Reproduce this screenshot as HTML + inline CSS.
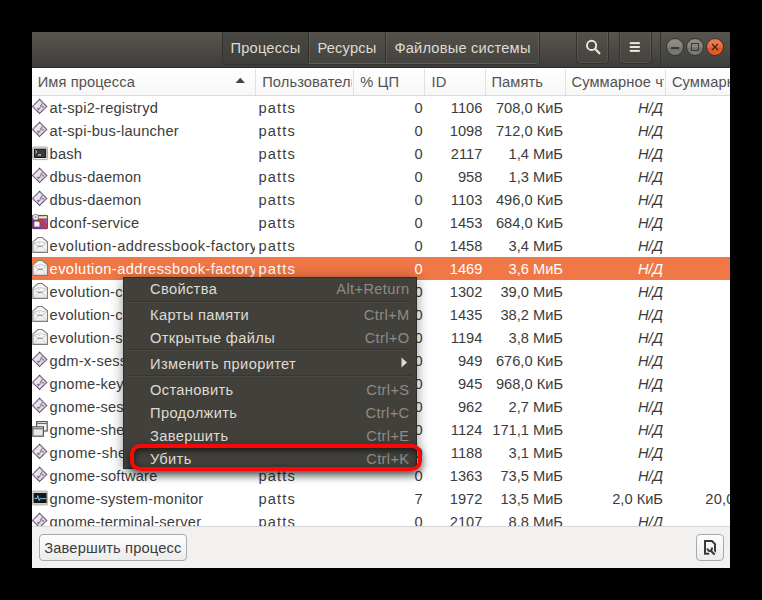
<!DOCTYPE html><html><head><meta charset="utf-8"><style>
*{margin:0;padding:0;box-sizing:border-box}
html,body{width:762px;height:600px;background:#000;overflow:hidden}
body{font-family:"Liberation Sans",sans-serif;font-size:14.67px;position:relative}
.win{position:absolute;left:32px;top:32px;width:698px;height:536px;background:#f2f1f0;overflow:hidden}
.hdr{position:absolute;left:0;top:0;width:698px;height:36px;background:linear-gradient(to bottom,#58554e 0%,#4c4a45 50%,#3e3d39 100%);border-bottom:1px solid #2b2a27}
.grp{position:absolute;left:190px;top:-4px;height:37px;width:318px;border:1px solid #33322e;border-radius:4px;background:linear-gradient(to bottom,#55524c,#45433f);box-shadow:inset 0 0 0 1px rgba(255,255,255,0.07)}
.tab{position:absolute;top:0;height:35px;line-height:38px;letter-spacing:0.2px;color:#dfdbd2;text-align:center;white-space:nowrap}
.tsep{position:absolute;top:0;width:1px;height:34px;background:#32312e}
.ibtn{position:absolute;top:-4px;width:33px;height:35.6px;border:1px solid #33322e;border-radius:4px;background:linear-gradient(to bottom,#55524c,#45433f);box-shadow:inset 0 0 0 1px rgba(255,255,255,0.07)}
.vsep{position:absolute;left:628px;top:0;width:1px;height:35px;background:#34332f}
.circ{position:absolute;top:6px;width:18px;height:18px;border-radius:50%;border:1px solid #34332f}
.colhdr{position:absolute;left:0;top:36px;width:698px;height:28px;background:linear-gradient(to bottom,#ffffff,#f7f7f7);border-bottom:1px solid #dcdcdc}
.ch{position:absolute;top:0;height:27px;line-height:29px;letter-spacing:0.1px;color:#525252;white-space:nowrap;overflow:hidden}
.csep{position:absolute;top:1px;width:1px;height:26px;background:#e2e2e2}
.tree{position:absolute;left:0;top:64px;width:698px;height:430px;background:#fff;overflow:hidden}
.row{position:absolute;left:0;width:698px;height:23px;line-height:25px;letter-spacing:0.2px;color:#3c3c3c;white-space:nowrap}
.row.sel{background:#f07746;color:#fff}
.c{position:absolute;top:0;height:23px;overflow:hidden}
.r{text-align:right;letter-spacing:0}
.it{font-style:italic}
.ico{position:absolute;left:0;top:0;width:16px;height:23px}
.bot{position:absolute;left:0;top:494px;width:698px;height:42px;background:#f2f1f0;border-top:1px solid #d6d6d6}
.btn{position:absolute;border:1px solid #a9a9a9;border-radius:4px;background:linear-gradient(to bottom,#fdfdfd,#ececec);color:#3c3c3c;white-space:nowrap}
.menu{position:absolute;left:123px;top:277px;width:294px;height:192px;background:#42403b;border:1px solid #2e2d2a;box-shadow:0 2px 12px rgba(0,0,0,0.42)}
.mi{position:absolute;left:0;width:292px;height:23px;line-height:25px;letter-spacing:0.35px;color:#dfdbd2;white-space:nowrap}
.mi .l{position:absolute;left:26px}
.mi .a{position:absolute;right:6.5px;color:#8e8b84}
.msep{position:absolute;left:5px;width:283px;height:2px;background:#37362f;border-bottom:1px solid #4b4944}
</style></head><body>
<svg width="0" height="0" style="position:absolute"><defs><linearGradient id="dg" x1="0" y1="0" x2="1" y2="1"><stop offset="0" stop-color="#f6f6f6"/><stop offset="1" stop-color="#d2d2d2"/></linearGradient></defs></svg>
<div class="win">
<div class="hdr">
<div class="grp">
<div class="tab" style="left:0;width:85px;background:linear-gradient(to bottom,#4a4843,#403e3a);border-radius:0 0 0 3px">Процессы</div>
<div class="tsep" style="left:85px"></div>
<div class="tab" style="left:86px;width:76px;box-shadow:inset 1px 0 rgba(255,255,255,0.07),inset 0 -1px rgba(255,255,255,0.07)">Ресурсы</div>
<div class="tsep" style="left:162px"></div>
<div class="tab" style="left:163px;width:153px;box-shadow:inset 1px 0 rgba(255,255,255,0.07),inset 0 -1px rgba(255,255,255,0.07)">Файловые системы</div>
</div>
<div class="ibtn" style="left:544px"><svg width="31" height="35" viewBox="0 0 31 35" style="position:absolute;left:0;top:0"><circle cx="14.6" cy="16.4" r="4.6" stroke="#eae6dc" stroke-width="1.9" fill="none"/><path d="M18 19.8 L22.4 24.3" stroke="#eae6dc" stroke-width="2.2" stroke-linecap="round"/></svg></div>
<div class="ibtn" style="left:587px"><svg width="31" height="35" viewBox="0 0 31 35" style="position:absolute;left:0;top:0"><rect x="9.8" y="13.1" width="10" height="2" fill="#eae6dc"/><rect x="9.8" y="17" width="10" height="2" fill="#eae6dc"/><rect x="9.8" y="20.9" width="10" height="2" fill="#eae6dc"/></svg></div>
<div class="vsep"></div>
<div class="circ" style="left:634px;background:linear-gradient(to bottom,#8f8e89 0%,#85847f 50%,#6e7171 56%,#7d7e7b 100%)"><div style="position:absolute;left:4px;top:7.6px;width:8px;height:2px;background:#3a3a38"></div></div>
<div class="circ" style="left:654px;background:linear-gradient(to bottom,#8f8e89 0%,#85847f 50%,#6e7171 56%,#7d7e7b 100%)"><div style="position:absolute;left:4px;top:4px;width:8px;height:8px;border:1.2px solid #3a3a38"></div></div>
<div class="circ" style="left:674px;background:linear-gradient(to bottom,#f27c52 0%,#ee6c3c 50%,#e6561f 56%,#e95c26 100%)"><svg width="16" height="16" style="position:absolute;left:0;top:0"><path d="M5 5 L11 11 M11 5 L5 11" stroke="#2a2522" stroke-width="1.1"/><circle cx="8" cy="8" r="1" fill="#2a2522"/></svg></div>
</div>
<div class="colhdr">
<div class="ch" style="left:5.7px;width:216.3px">Имя процесса</div>
<div class="ch" style="left:230.2px;width:89.8px">Пользователь</div>
<div class="ch" style="left:328.3px;width:62.7px">% ЦП</div>
<div class="ch" style="left:399.5px;width:52.5px">ID</div>
<div class="ch" style="left:459.4px;width:72.6px">Память</div>
<div class="ch" style="left:539.5px;width:92.0px">Суммарное чтение</div>
<div class="ch" style="left:639.9px;width:87.1px">Суммарная запись</div>
<div class="csep" style="left:223.0px"></div>
<div class="csep" style="left:321.0px"></div>
<div class="csep" style="left:392.0px"></div>
<div class="csep" style="left:453.0px"></div>
<div class="csep" style="left:533.0px"></div>
<div class="csep" style="left:632.5px"></div>
<svg width="12" height="8" style="position:absolute;left:203px;top:9px"><path d="M0.5 6 L5.25 0.8 L10 6 Z" fill="#454545"/></svg>
</div>
<div class="tree">
<div class="row" style="top:0px">
<div class="c" style="left:0;width:223px"><span class="ico" style="left:0px"><svg width="16" height="23" viewBox="0 0 16 23"><path d="M7.6 3.4 L14.7 10.45 L7.6 17.5 L0.5 10.45 Z" fill="url(#dg)" stroke="#5a3a6c" stroke-width="1.15" stroke-dasharray="1.2 0.3"/><path d="M11 6.9 Q9.4 8.4 8.8 10.4 Q8.2 12.6 5.4 14.4" stroke="#8e8e8e" stroke-width="1.2" fill="none"/><ellipse cx="6.3" cy="12.4" rx="1.4" ry="0.75" fill="#9b62ae"/><ellipse cx="10.9" cy="10.7" rx="1.1" ry="0.85" fill="#a06ab4"/><circle cx="8.7" cy="9.7" r="0.6" fill="#a06ab4"/><circle cx="9.3" cy="8.2" r="0.5" fill="#a06ab4"/></svg></span><span style="position:absolute;left:17.6px;letter-spacing:inherit">at-spi2-registryd</span></div>
<div class="c" style="left:226.6px;width:94.4px;letter-spacing:1.1px">patts</div>
<div class="c r" style="left:322px;width:68.6px">0</div>
<div class="c r" style="left:393px;width:57.4px">1106</div>
<div class="c r" style="left:454px;width:77.0px">708,0 КиБ</div>
<div class="c r it" style="left:534px;width:97.0px">Н/Д</div>
</div>
<div class="row" style="top:23px">
<div class="c" style="left:0;width:223px"><span class="ico" style="left:0px"><svg width="16" height="23" viewBox="0 0 16 23"><path d="M7.6 3.4 L14.7 10.45 L7.6 17.5 L0.5 10.45 Z" fill="url(#dg)" stroke="#5a3a6c" stroke-width="1.15" stroke-dasharray="1.2 0.3"/><path d="M11 6.9 Q9.4 8.4 8.8 10.4 Q8.2 12.6 5.4 14.4" stroke="#8e8e8e" stroke-width="1.2" fill="none"/><ellipse cx="6.3" cy="12.4" rx="1.4" ry="0.75" fill="#9b62ae"/><ellipse cx="10.9" cy="10.7" rx="1.1" ry="0.85" fill="#a06ab4"/><circle cx="8.7" cy="9.7" r="0.6" fill="#a06ab4"/><circle cx="9.3" cy="8.2" r="0.5" fill="#a06ab4"/></svg></span><span style="position:absolute;left:17.6px;letter-spacing:inherit">at-spi-bus-launcher</span></div>
<div class="c" style="left:226.6px;width:94.4px;letter-spacing:1.1px">patts</div>
<div class="c r" style="left:322px;width:68.6px">0</div>
<div class="c r" style="left:393px;width:57.4px">1098</div>
<div class="c r" style="left:454px;width:77.0px">712,0 КиБ</div>
<div class="c r it" style="left:534px;width:97.0px">Н/Д</div>
</div>
<div class="row" style="top:46px">
<div class="c" style="left:0;width:223px"><span class="ico" style="left:0px"><svg width="16" height="23" viewBox="0 0 16 23"><rect x="0.6" y="5" width="15" height="12.6" rx="1.2" fill="#f2f2f2" stroke="#a0a0a0" stroke-width="0.9"/><rect x="2.3" y="7.1" width="11.5" height="8.4" fill="#3a3a3a" stroke="#0a0a0a" stroke-width="0.9"/><path d="M3.3 8.3 L5 9.8 L3.3 11.3" stroke="#e0e0e0" stroke-width="0.9" fill="none"/><rect x="6" y="12.4" width="3" height="1.1" fill="#f0f0f0"/></svg></span><span style="position:absolute;left:17.6px;letter-spacing:inherit">bash</span></div>
<div class="c" style="left:226.6px;width:94.4px;letter-spacing:1.1px">patts</div>
<div class="c r" style="left:322px;width:68.6px">0</div>
<div class="c r" style="left:393px;width:57.4px">2117</div>
<div class="c r" style="left:454px;width:77.0px">1,4 МиБ</div>
<div class="c r it" style="left:534px;width:97.0px">Н/Д</div>
</div>
<div class="row" style="top:69px">
<div class="c" style="left:0;width:223px"><span class="ico" style="left:0px"><svg width="16" height="23" viewBox="0 0 16 23"><path d="M7.6 3.4 L14.7 10.45 L7.6 17.5 L0.5 10.45 Z" fill="url(#dg)" stroke="#5a3a6c" stroke-width="1.15" stroke-dasharray="1.2 0.3"/><path d="M11 6.9 Q9.4 8.4 8.8 10.4 Q8.2 12.6 5.4 14.4" stroke="#8e8e8e" stroke-width="1.2" fill="none"/><ellipse cx="6.3" cy="12.4" rx="1.4" ry="0.75" fill="#9b62ae"/><ellipse cx="10.9" cy="10.7" rx="1.1" ry="0.85" fill="#a06ab4"/><circle cx="8.7" cy="9.7" r="0.6" fill="#a06ab4"/><circle cx="9.3" cy="8.2" r="0.5" fill="#a06ab4"/></svg></span><span style="position:absolute;left:17.6px;letter-spacing:inherit">dbus-daemon</span></div>
<div class="c" style="left:226.6px;width:94.4px;letter-spacing:1.1px">patts</div>
<div class="c r" style="left:322px;width:68.6px">0</div>
<div class="c r" style="left:393px;width:57.4px">958</div>
<div class="c r" style="left:454px;width:77.0px">1,3 МиБ</div>
<div class="c r it" style="left:534px;width:97.0px">Н/Д</div>
</div>
<div class="row" style="top:92px">
<div class="c" style="left:0;width:223px"><span class="ico" style="left:0px"><svg width="16" height="23" viewBox="0 0 16 23"><path d="M7.6 3.4 L14.7 10.45 L7.6 17.5 L0.5 10.45 Z" fill="url(#dg)" stroke="#5a3a6c" stroke-width="1.15" stroke-dasharray="1.2 0.3"/><path d="M11 6.9 Q9.4 8.4 8.8 10.4 Q8.2 12.6 5.4 14.4" stroke="#8e8e8e" stroke-width="1.2" fill="none"/><ellipse cx="6.3" cy="12.4" rx="1.4" ry="0.75" fill="#9b62ae"/><ellipse cx="10.9" cy="10.7" rx="1.1" ry="0.85" fill="#a06ab4"/><circle cx="8.7" cy="9.7" r="0.6" fill="#a06ab4"/><circle cx="9.3" cy="8.2" r="0.5" fill="#a06ab4"/></svg></span><span style="position:absolute;left:17.6px;letter-spacing:inherit">dbus-daemon</span></div>
<div class="c" style="left:226.6px;width:94.4px;letter-spacing:1.1px">patts</div>
<div class="c r" style="left:322px;width:68.6px">0</div>
<div class="c r" style="left:393px;width:57.4px">1103</div>
<div class="c r" style="left:454px;width:77.0px">496,0 КиБ</div>
<div class="c r it" style="left:534px;width:97.0px">Н/Д</div>
</div>
<div class="row" style="top:115px">
<div class="c" style="left:0;width:223px"><span class="ico" style="left:0px"><svg width="16" height="23" viewBox="0 0 16 23"><defs><linearGradient id="pg" x1="0" y1="0" x2="1" y2="0"><stop offset="0" stop-color="#6e2c84"/><stop offset="1" stop-color="#9a5cb0"/></linearGradient></defs><rect x="0.4" y="4.4" width="15.2" height="13.3" rx="0.8" fill="url(#pg)" stroke="#54205f" stroke-width="0.8"/><rect x="0.6" y="4.6" width="14.8" height="3.6" fill="#5e5048"/><rect x="6.6" y="5.2" width="8.4" height="2.3" fill="#f3e6c4"/><circle cx="3.6" cy="6.2" r="2.9" fill="#f0f0f0" stroke="#7c7c7c" stroke-width="0.9"/><circle cx="3.6" cy="6.2" r="0.9" fill="#888"/><rect x="2.2" y="10.8" width="5.2" height="4.8" fill="#f6f6f6" stroke="#bbb" stroke-width="0.4"/><path d="M7.4 8.6 L15.2 17.2" stroke="#a82424" stroke-width="3.1"/><path d="M7.4 8.6 L15.2 17.2" stroke="#d84040" stroke-width="1.9"/></svg></span><span style="position:absolute;left:17.6px;letter-spacing:inherit">dconf-service</span></div>
<div class="c" style="left:226.6px;width:94.4px;letter-spacing:1.1px">patts</div>
<div class="c r" style="left:322px;width:68.6px">0</div>
<div class="c r" style="left:393px;width:57.4px">1453</div>
<div class="c r" style="left:454px;width:77.0px">684,0 КиБ</div>
<div class="c r it" style="left:534px;width:97.0px">Н/Д</div>
</div>
<div class="row" style="top:138px">
<div class="c" style="left:0;width:223px"><span class="ico" style="left:0px"><svg width="16" height="23" viewBox="0 0 16 23"><defs><linearGradient id="eg" x1="0" y1="0" x2="0" y2="1"><stop offset="0" stop-color="#fdfdfd"/><stop offset="1" stop-color="#ececec"/></linearGradient></defs><path d="M0.9 18.4 L15.5 18.4 L15.5 7.9 L10.1 3.5 L6.1 3.5 L0.9 7.9 Z" fill="url(#eg)" stroke="#7e7e7e" stroke-width="1.1"/><path d="M2.6 9 Q8 6.2 13.6 8.8" stroke="#c4c4c4" stroke-width="0.9" fill="none"/><path d="M1.4 8.4 L5.9 12.3 L10.3 12.3 L14.9 8.4" stroke="#b9b9b9" stroke-width="0.8" fill="none"/><path d="M5.6 12.3 L10.6 12.3" stroke="#8e8e8e" stroke-width="1.1"/><path d="M2.3 17.4 L6.2 12.8 M14.1 17.4 L10.2 12.8" stroke="#cfcfcf" stroke-width="0.8" fill="none"/><circle cx="7.4" cy="9.3" r="0.55" fill="#a9b0b4"/></svg></span><span style="position:absolute;left:17.6px;letter-spacing:0.4px">evolution-addressbook-factory</span></div>
<div class="c" style="left:226.6px;width:94.4px;letter-spacing:1.1px">patts</div>
<div class="c r" style="left:322px;width:68.6px">0</div>
<div class="c r" style="left:393px;width:57.4px">1458</div>
<div class="c r" style="left:454px;width:77.0px">3,4 МиБ</div>
<div class="c r it" style="left:534px;width:97.0px">Н/Д</div>
</div>
<div class="row sel" style="top:161px">
<div class="c" style="left:0;width:223px"><span class="ico" style="left:0px"><svg width="16" height="23" viewBox="0 0 16 23"><defs><linearGradient id="eg" x1="0" y1="0" x2="0" y2="1"><stop offset="0" stop-color="#fdfdfd"/><stop offset="1" stop-color="#ececec"/></linearGradient></defs><path d="M0.9 18.4 L15.5 18.4 L15.5 7.9 L10.1 3.5 L6.1 3.5 L0.9 7.9 Z" fill="url(#eg)" stroke="#7e7e7e" stroke-width="1.1"/><path d="M2.6 9 Q8 6.2 13.6 8.8" stroke="#c4c4c4" stroke-width="0.9" fill="none"/><path d="M1.4 8.4 L5.9 12.3 L10.3 12.3 L14.9 8.4" stroke="#b9b9b9" stroke-width="0.8" fill="none"/><path d="M5.6 12.3 L10.6 12.3" stroke="#8e8e8e" stroke-width="1.1"/><path d="M2.3 17.4 L6.2 12.8 M14.1 17.4 L10.2 12.8" stroke="#cfcfcf" stroke-width="0.8" fill="none"/><circle cx="7.4" cy="9.3" r="0.55" fill="#a9b0b4"/></svg></span><span style="position:absolute;left:17.6px;letter-spacing:0.4px">evolution-addressbook-factory</span></div>
<div class="c" style="left:226.6px;width:94.4px;letter-spacing:1.1px">patts</div>
<div class="c r" style="left:322px;width:68.6px">0</div>
<div class="c r" style="left:393px;width:57.4px">1469</div>
<div class="c r" style="left:454px;width:77.0px">3,6 МиБ</div>
<div class="c r it" style="left:534px;width:97.0px">Н/Д</div>
</div>
<div class="row" style="top:184px">
<div class="c" style="left:0;width:223px"><span class="ico" style="left:0px"><svg width="16" height="23" viewBox="0 0 16 23"><defs><linearGradient id="eg" x1="0" y1="0" x2="0" y2="1"><stop offset="0" stop-color="#fdfdfd"/><stop offset="1" stop-color="#ececec"/></linearGradient></defs><path d="M0.9 18.4 L15.5 18.4 L15.5 7.9 L10.1 3.5 L6.1 3.5 L0.9 7.9 Z" fill="url(#eg)" stroke="#7e7e7e" stroke-width="1.1"/><path d="M2.6 9 Q8 6.2 13.6 8.8" stroke="#c4c4c4" stroke-width="0.9" fill="none"/><path d="M1.4 8.4 L5.9 12.3 L10.3 12.3 L14.9 8.4" stroke="#b9b9b9" stroke-width="0.8" fill="none"/><path d="M5.6 12.3 L10.6 12.3" stroke="#8e8e8e" stroke-width="1.1"/><path d="M2.3 17.4 L6.2 12.8 M14.1 17.4 L10.2 12.8" stroke="#cfcfcf" stroke-width="0.8" fill="none"/><circle cx="7.4" cy="9.3" r="0.55" fill="#a9b0b4"/></svg></span><span style="position:absolute;left:17.6px;letter-spacing:inherit">evolution-calendar-factory</span></div>
<div class="c" style="left:226.6px;width:94.4px;letter-spacing:1.1px">patts</div>
<div class="c r" style="left:322px;width:68.6px">0</div>
<div class="c r" style="left:393px;width:57.4px">1302</div>
<div class="c r" style="left:454px;width:77.0px">39,0 МиБ</div>
<div class="c r it" style="left:534px;width:97.0px">Н/Д</div>
</div>
<div class="row" style="top:207px">
<div class="c" style="left:0;width:223px"><span class="ico" style="left:0px"><svg width="16" height="23" viewBox="0 0 16 23"><defs><linearGradient id="eg" x1="0" y1="0" x2="0" y2="1"><stop offset="0" stop-color="#fdfdfd"/><stop offset="1" stop-color="#ececec"/></linearGradient></defs><path d="M0.9 18.4 L15.5 18.4 L15.5 7.9 L10.1 3.5 L6.1 3.5 L0.9 7.9 Z" fill="url(#eg)" stroke="#7e7e7e" stroke-width="1.1"/><path d="M2.6 9 Q8 6.2 13.6 8.8" stroke="#c4c4c4" stroke-width="0.9" fill="none"/><path d="M1.4 8.4 L5.9 12.3 L10.3 12.3 L14.9 8.4" stroke="#b9b9b9" stroke-width="0.8" fill="none"/><path d="M5.6 12.3 L10.6 12.3" stroke="#8e8e8e" stroke-width="1.1"/><path d="M2.3 17.4 L6.2 12.8 M14.1 17.4 L10.2 12.8" stroke="#cfcfcf" stroke-width="0.8" fill="none"/><circle cx="7.4" cy="9.3" r="0.55" fill="#a9b0b4"/></svg></span><span style="position:absolute;left:17.6px;letter-spacing:inherit">evolution-calendar-factory</span></div>
<div class="c" style="left:226.6px;width:94.4px;letter-spacing:1.1px">patts</div>
<div class="c r" style="left:322px;width:68.6px">0</div>
<div class="c r" style="left:393px;width:57.4px">1435</div>
<div class="c r" style="left:454px;width:77.0px">38,2 МиБ</div>
<div class="c r it" style="left:534px;width:97.0px">Н/Д</div>
</div>
<div class="row" style="top:230px">
<div class="c" style="left:0;width:223px"><span class="ico" style="left:0px"><svg width="16" height="23" viewBox="0 0 16 23"><defs><linearGradient id="eg" x1="0" y1="0" x2="0" y2="1"><stop offset="0" stop-color="#fdfdfd"/><stop offset="1" stop-color="#ececec"/></linearGradient></defs><path d="M0.9 18.4 L15.5 18.4 L15.5 7.9 L10.1 3.5 L6.1 3.5 L0.9 7.9 Z" fill="url(#eg)" stroke="#7e7e7e" stroke-width="1.1"/><path d="M2.6 9 Q8 6.2 13.6 8.8" stroke="#c4c4c4" stroke-width="0.9" fill="none"/><path d="M1.4 8.4 L5.9 12.3 L10.3 12.3 L14.9 8.4" stroke="#b9b9b9" stroke-width="0.8" fill="none"/><path d="M5.6 12.3 L10.6 12.3" stroke="#8e8e8e" stroke-width="1.1"/><path d="M2.3 17.4 L6.2 12.8 M14.1 17.4 L10.2 12.8" stroke="#cfcfcf" stroke-width="0.8" fill="none"/><circle cx="7.4" cy="9.3" r="0.55" fill="#a9b0b4"/></svg></span><span style="position:absolute;left:17.6px;letter-spacing:inherit">evolution-source-registry</span></div>
<div class="c" style="left:226.6px;width:94.4px;letter-spacing:1.1px">patts</div>
<div class="c r" style="left:322px;width:68.6px">0</div>
<div class="c r" style="left:393px;width:57.4px">1194</div>
<div class="c r" style="left:454px;width:77.0px">3,8 МиБ</div>
<div class="c r it" style="left:534px;width:97.0px">Н/Д</div>
</div>
<div class="row" style="top:253px">
<div class="c" style="left:0;width:223px"><span class="ico" style="left:0px"><svg width="16" height="23" viewBox="0 0 16 23"><path d="M7.6 3.4 L14.7 10.45 L7.6 17.5 L0.5 10.45 Z" fill="url(#dg)" stroke="#5a3a6c" stroke-width="1.15" stroke-dasharray="1.2 0.3"/><path d="M11 6.9 Q9.4 8.4 8.8 10.4 Q8.2 12.6 5.4 14.4" stroke="#8e8e8e" stroke-width="1.2" fill="none"/><ellipse cx="6.3" cy="12.4" rx="1.4" ry="0.75" fill="#9b62ae"/><ellipse cx="10.9" cy="10.7" rx="1.1" ry="0.85" fill="#a06ab4"/><circle cx="8.7" cy="9.7" r="0.6" fill="#a06ab4"/><circle cx="9.3" cy="8.2" r="0.5" fill="#a06ab4"/></svg></span><span style="position:absolute;left:17.6px;letter-spacing:inherit">gdm-x-session</span></div>
<div class="c" style="left:226.6px;width:94.4px;letter-spacing:1.1px">patts</div>
<div class="c r" style="left:322px;width:68.6px">0</div>
<div class="c r" style="left:393px;width:57.4px">949</div>
<div class="c r" style="left:454px;width:77.0px">676,0 КиБ</div>
<div class="c r it" style="left:534px;width:97.0px">Н/Д</div>
</div>
<div class="row" style="top:276px">
<div class="c" style="left:0;width:223px"><span class="ico" style="left:0px"><svg width="16" height="23" viewBox="0 0 16 23"><path d="M7.6 3.4 L14.7 10.45 L7.6 17.5 L0.5 10.45 Z" fill="url(#dg)" stroke="#5a3a6c" stroke-width="1.15" stroke-dasharray="1.2 0.3"/><path d="M11 6.9 Q9.4 8.4 8.8 10.4 Q8.2 12.6 5.4 14.4" stroke="#8e8e8e" stroke-width="1.2" fill="none"/><ellipse cx="6.3" cy="12.4" rx="1.4" ry="0.75" fill="#9b62ae"/><ellipse cx="10.9" cy="10.7" rx="1.1" ry="0.85" fill="#a06ab4"/><circle cx="8.7" cy="9.7" r="0.6" fill="#a06ab4"/><circle cx="9.3" cy="8.2" r="0.5" fill="#a06ab4"/></svg></span><span style="position:absolute;left:17.6px;letter-spacing:inherit">gnome-keyring-daemon</span></div>
<div class="c" style="left:226.6px;width:94.4px;letter-spacing:1.1px">patts</div>
<div class="c r" style="left:322px;width:68.6px">0</div>
<div class="c r" style="left:393px;width:57.4px">945</div>
<div class="c r" style="left:454px;width:77.0px">968,0 КиБ</div>
<div class="c r it" style="left:534px;width:97.0px">Н/Д</div>
</div>
<div class="row" style="top:299px">
<div class="c" style="left:0;width:223px"><span class="ico" style="left:0px"><svg width="16" height="23" viewBox="0 0 16 23"><path d="M7.6 3.4 L14.7 10.45 L7.6 17.5 L0.5 10.45 Z" fill="url(#dg)" stroke="#5a3a6c" stroke-width="1.15" stroke-dasharray="1.2 0.3"/><path d="M11 6.9 Q9.4 8.4 8.8 10.4 Q8.2 12.6 5.4 14.4" stroke="#8e8e8e" stroke-width="1.2" fill="none"/><ellipse cx="6.3" cy="12.4" rx="1.4" ry="0.75" fill="#9b62ae"/><ellipse cx="10.9" cy="10.7" rx="1.1" ry="0.85" fill="#a06ab4"/><circle cx="8.7" cy="9.7" r="0.6" fill="#a06ab4"/><circle cx="9.3" cy="8.2" r="0.5" fill="#a06ab4"/></svg></span><span style="position:absolute;left:17.6px;letter-spacing:inherit">gnome-session-binary</span></div>
<div class="c" style="left:226.6px;width:94.4px;letter-spacing:1.1px">patts</div>
<div class="c r" style="left:322px;width:68.6px">0</div>
<div class="c r" style="left:393px;width:57.4px">962</div>
<div class="c r" style="left:454px;width:77.0px">2,7 МиБ</div>
<div class="c r it" style="left:534px;width:97.0px">Н/Д</div>
</div>
<div class="row" style="top:322px">
<div class="c" style="left:0;width:223px"><span class="ico" style="left:0px"><svg width="16" height="23" viewBox="0 0 16 23"><rect x="4.6" y="3.6" width="10.6" height="9.4" fill="#f6f6f6" stroke="#575757" stroke-width="1.2"/><rect x="5.2" y="5" width="9.4" height="1.1" fill="#6a6a6a"/><rect x="0.8" y="8.8" width="10.6" height="9.4" fill="#e8e8e8" stroke="#575757" stroke-width="1.2"/><rect x="1.4" y="10.2" width="9.4" height="1.1" fill="#6a6a6a"/></svg></span><span style="position:absolute;left:17.6px;letter-spacing:inherit">gnome-shell</span></div>
<div class="c" style="left:226.6px;width:94.4px;letter-spacing:1.1px">patts</div>
<div class="c r" style="left:322px;width:68.6px">0</div>
<div class="c r" style="left:393px;width:57.4px">1124</div>
<div class="c r" style="left:454px;width:77.0px">171,1 МиБ</div>
<div class="c r it" style="left:534px;width:97.0px">Н/Д</div>
</div>
<div class="row" style="top:345px">
<div class="c" style="left:0;width:223px"><span class="ico" style="left:0px"><svg width="16" height="23" viewBox="0 0 16 23"><path d="M7.6 3.4 L14.7 10.45 L7.6 17.5 L0.5 10.45 Z" fill="url(#dg)" stroke="#5a3a6c" stroke-width="1.15" stroke-dasharray="1.2 0.3"/><path d="M11 6.9 Q9.4 8.4 8.8 10.4 Q8.2 12.6 5.4 14.4" stroke="#8e8e8e" stroke-width="1.2" fill="none"/><ellipse cx="6.3" cy="12.4" rx="1.4" ry="0.75" fill="#9b62ae"/><ellipse cx="10.9" cy="10.7" rx="1.1" ry="0.85" fill="#a06ab4"/><circle cx="8.7" cy="9.7" r="0.6" fill="#a06ab4"/><circle cx="9.3" cy="8.2" r="0.5" fill="#a06ab4"/></svg></span><span style="position:absolute;left:17.6px;letter-spacing:0.4px">gnome-shell-calendar-server</span></div>
<div class="c" style="left:226.6px;width:94.4px;letter-spacing:1.1px">patts</div>
<div class="c r" style="left:322px;width:68.6px">0</div>
<div class="c r" style="left:393px;width:57.4px">1188</div>
<div class="c r" style="left:454px;width:77.0px">3,1 МиБ</div>
<div class="c r it" style="left:534px;width:97.0px">Н/Д</div>
</div>
<div class="row" style="top:368px">
<div class="c" style="left:0;width:223px"><span class="ico" style="left:0px"><svg width="16" height="23" viewBox="0 0 16 23"><path d="M7.6 3.4 L14.7 10.45 L7.6 17.5 L0.5 10.45 Z" fill="url(#dg)" stroke="#5a3a6c" stroke-width="1.15" stroke-dasharray="1.2 0.3"/><path d="M11 6.9 Q9.4 8.4 8.8 10.4 Q8.2 12.6 5.4 14.4" stroke="#8e8e8e" stroke-width="1.2" fill="none"/><ellipse cx="6.3" cy="12.4" rx="1.4" ry="0.75" fill="#9b62ae"/><ellipse cx="10.9" cy="10.7" rx="1.1" ry="0.85" fill="#a06ab4"/><circle cx="8.7" cy="9.7" r="0.6" fill="#a06ab4"/><circle cx="9.3" cy="8.2" r="0.5" fill="#a06ab4"/></svg></span><span style="position:absolute;left:17.6px;letter-spacing:inherit">gnome-software</span></div>
<div class="c" style="left:226.6px;width:94.4px;letter-spacing:1.1px">patts</div>
<div class="c r" style="left:322px;width:68.6px">0</div>
<div class="c r" style="left:393px;width:57.4px">1363</div>
<div class="c r" style="left:454px;width:77.0px">73,5 МиБ</div>
<div class="c r it" style="left:534px;width:97.0px">Н/Д</div>
</div>
<div class="row" style="top:391px">
<div class="c" style="left:0;width:223px"><span class="ico" style="left:0px"><svg width="16" height="23" viewBox="0 0 16 23"><rect x="0.6" y="4" width="15" height="14" rx="0.8" fill="#cfcfcf" stroke="#a5a5a5" stroke-width="0.7"/><rect x="1.6" y="6" width="13" height="10" fill="#161616"/><path d="M2.4 11.5 L5 11.5 L5.8 8.6 L6.6 12.6 L7.4 13.6 L8.3 10.8 L9.2 11.8 L14 11.5" stroke="#86bfea" stroke-width="1" fill="none"/></svg></span><span style="position:absolute;left:17.6px;letter-spacing:inherit">gnome-system-monitor</span></div>
<div class="c" style="left:226.6px;width:94.4px;letter-spacing:1.1px">patts</div>
<div class="c r" style="left:322px;width:68.6px">7</div>
<div class="c r" style="left:393px;width:57.4px">1972</div>
<div class="c r" style="left:454px;width:77.0px">13,5 МиБ</div>
<div class="c r" style="left:534px;width:97.0px">2,0 КиБ</div>
<div class="c" style="left:673.3px;width:60px">20,0 КиБ</div>
</div>
<div class="row" style="top:414px">
<div class="c" style="left:0;width:223px"><span class="ico" style="left:0px"><svg width="16" height="23" viewBox="0 0 16 23"><path d="M7.6 3.4 L14.7 10.45 L7.6 17.5 L0.5 10.45 Z" fill="url(#dg)" stroke="#5a3a6c" stroke-width="1.15" stroke-dasharray="1.2 0.3"/><path d="M11 6.9 Q9.4 8.4 8.8 10.4 Q8.2 12.6 5.4 14.4" stroke="#8e8e8e" stroke-width="1.2" fill="none"/><ellipse cx="6.3" cy="12.4" rx="1.4" ry="0.75" fill="#9b62ae"/><ellipse cx="10.9" cy="10.7" rx="1.1" ry="0.85" fill="#a06ab4"/><circle cx="8.7" cy="9.7" r="0.6" fill="#a06ab4"/><circle cx="9.3" cy="8.2" r="0.5" fill="#a06ab4"/></svg></span><span style="position:absolute;left:17.6px;letter-spacing:inherit">gnome-terminal-server</span></div>
<div class="c" style="left:226.6px;width:94.4px;letter-spacing:1.1px">patts</div>
<div class="c r" style="left:322px;width:68.6px">0</div>
<div class="c r" style="left:393px;width:57.4px">2107</div>
<div class="c r" style="left:454px;width:77.0px">8,8 МиБ</div>
<div class="c r it" style="left:534px;width:97.0px">Н/Д</div>
</div>
</div>
<div class="bot">
<div class="btn" style="left:6.5px;top:7.2px;width:148px;height:27px;line-height:27px;letter-spacing:0.15px;padding-left:4.8px">Завершить процесс</div>
<div class="btn" style="left:664px;top:7px;width:28px;height:27px"><svg width="26" height="25" viewBox="0 0 26 25" style="position:absolute;left:0;top:0"><path d="M8 18.7 L8 6 L14.9 6 L18 9.1 L18 17.4" stroke="#3b3b3b" stroke-width="2" fill="none"/><path d="M7 18.7 L12.2 18.7" stroke="#3b3b3b" stroke-width="2"/><path d="M13.6 15.6 L17 19" stroke="#f4f4f4" stroke-width="4.2"/><path d="M10.6 13.4 A2.2 2.2 0 1 0 14.6 12.6" stroke="#3b3b3b" stroke-width="1.9" fill="none"/><path d="M13.6 15.6 L17 19" stroke="#3b3b3b" stroke-width="2.1" stroke-linecap="round"/></svg></div>
</div>
</div>
<div class="menu">
<div class="mi" style="top:-0.6px"><span class="l">Свойства</span><span class="a">Alt+Return</span></div>
<div class="msep" style="top:22.5px"></div>
<div class="mi" style="top:25.2px"><span class="l">Карты памяти</span><span class="a">Ctrl+M</span></div>
<div class="mi" style="top:48.4px"><span class="l">Открытые файлы</span><span class="a">Ctrl+O</span></div>
<div class="msep" style="top:70.6px"></div>
<div class="mi" style="top:74.4px"><span class="l">Изменить приоритет</span><svg width="7" height="11" style="position:absolute;right:8px;top:5px"><path d="M0.5 0.5 L6 5.5 L0.5 10.5 Z" fill="#dfdbd2"/></svg></div>
<div class="msep" style="top:97.1px"></div>
<div class="mi" style="top:100.4px"><span class="l">Остановить</span><span class="a">Ctrl+S</span></div>
<div class="mi" style="top:123.1px"><span class="l">Продолжить</span><span class="a">Ctrl+C</span></div>
<div class="mi" style="top:146.0px"><span class="l">Завершить</span><span class="a">Ctrl+E</span></div>
<div class="mi" style="top:168.8px"><span class="l">Убить</span><span class="a">Ctrl+K</span></div>
</div>
<div style="position:absolute;left:129.5px;top:444px;width:292px;height:27.3px;border:4px solid #fa0808;border-radius:10px;box-shadow:0 4px 9px rgba(0,0,0,0.6), inset 0 2px 6px rgba(0,0,0,0.7)"></div>
</body></html>
